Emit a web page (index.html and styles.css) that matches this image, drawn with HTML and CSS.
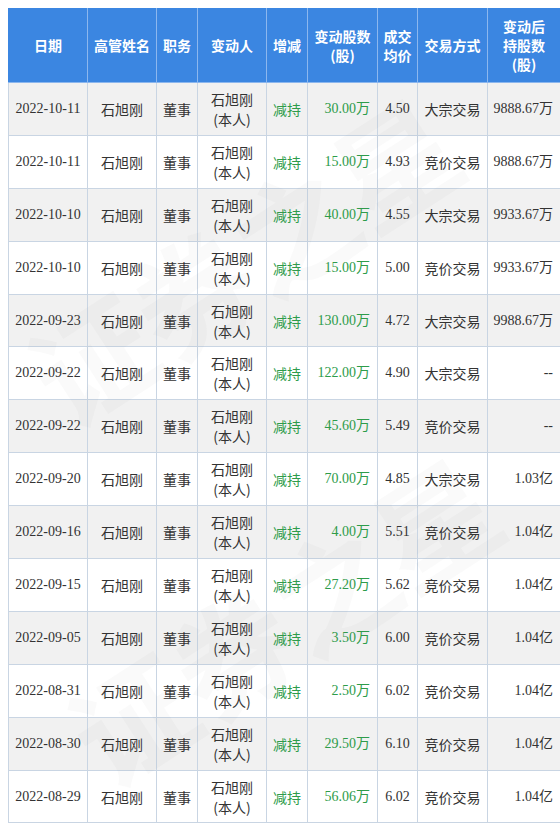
FILE: index.html
```html
<!DOCTYPE html>
<html lang="zh-CN">
<head>
<meta charset="utf-8">
<title>高管增减持</title>
<link rel="stylesheet" href="styles.css">
</head>
<body>
<div class="wrap">
<table class="tbl">
  <colgroup>
    <col class="c1"><col class="c2"><col class="c3"><col class="c4"><col class="c5"><col class="c6"><col class="c7"><col class="c8"><col class="c9">
  </colgroup>
  <thead>
    <tr>
      <th>日期</th><th>高管姓名</th><th>职务</th><th>变动人</th><th>增减</th><th>变动股数<br>(股)</th><th>成交<br>均价</th><th>交易方式</th><th>变动后<br>持股数<br>(股)</th>
    </tr>
  </thead>
  <tbody>
    <tr><td>2022-10-11</td><td class="cn">石旭刚</td><td class="cn">董事</td><td class="cn">石旭刚<br>(本人)</td><td class="cn green">减持</td><td class="r green">30.00万</td><td>4.50</td><td class="cn">大宗交易</td><td class="r">9888.67万</td></tr>
    <tr><td>2022-10-11</td><td class="cn">石旭刚</td><td class="cn">董事</td><td class="cn">石旭刚<br>(本人)</td><td class="cn green">减持</td><td class="r green">15.00万</td><td>4.93</td><td class="cn">竞价交易</td><td class="r">9888.67万</td></tr>
    <tr><td>2022-10-10</td><td class="cn">石旭刚</td><td class="cn">董事</td><td class="cn">石旭刚<br>(本人)</td><td class="cn green">减持</td><td class="r green">40.00万</td><td>4.55</td><td class="cn">大宗交易</td><td class="r">9933.67万</td></tr>
    <tr><td>2022-10-10</td><td class="cn">石旭刚</td><td class="cn">董事</td><td class="cn">石旭刚<br>(本人)</td><td class="cn green">减持</td><td class="r green">15.00万</td><td>5.00</td><td class="cn">竞价交易</td><td class="r">9933.67万</td></tr>
    <tr><td>2022-09-23</td><td class="cn">石旭刚</td><td class="cn">董事</td><td class="cn">石旭刚<br>(本人)</td><td class="cn green">减持</td><td class="r green">130.00万</td><td>4.72</td><td class="cn">大宗交易</td><td class="r">9988.67万</td></tr>
    <tr><td>2022-09-22</td><td class="cn">石旭刚</td><td class="cn">董事</td><td class="cn">石旭刚<br>(本人)</td><td class="cn green">减持</td><td class="r green">122.00万</td><td>4.90</td><td class="cn">大宗交易</td><td class="r">--</td></tr>
    <tr><td>2022-09-22</td><td class="cn">石旭刚</td><td class="cn">董事</td><td class="cn">石旭刚<br>(本人)</td><td class="cn green">减持</td><td class="r green">45.60万</td><td>5.49</td><td class="cn">竞价交易</td><td class="r">--</td></tr>
    <tr><td>2022-09-20</td><td class="cn">石旭刚</td><td class="cn">董事</td><td class="cn">石旭刚<br>(本人)</td><td class="cn green">减持</td><td class="r green">70.00万</td><td>4.85</td><td class="cn">大宗交易</td><td class="r">1.03亿</td></tr>
    <tr><td>2022-09-16</td><td class="cn">石旭刚</td><td class="cn">董事</td><td class="cn">石旭刚<br>(本人)</td><td class="cn green">减持</td><td class="r green">4.00万</td><td>5.51</td><td class="cn">竞价交易</td><td class="r">1.04亿</td></tr>
    <tr><td>2022-09-15</td><td class="cn">石旭刚</td><td class="cn">董事</td><td class="cn">石旭刚<br>(本人)</td><td class="cn green">减持</td><td class="r green">27.20万</td><td>5.62</td><td class="cn">竞价交易</td><td class="r">1.04亿</td></tr>
    <tr><td>2022-09-05</td><td class="cn">石旭刚</td><td class="cn">董事</td><td class="cn">石旭刚<br>(本人)</td><td class="cn green">减持</td><td class="r green">3.50万</td><td>6.00</td><td class="cn">竞价交易</td><td class="r">1.04亿</td></tr>
    <tr><td>2022-08-31</td><td class="cn">石旭刚</td><td class="cn">董事</td><td class="cn">石旭刚<br>(本人)</td><td class="cn green">减持</td><td class="r green">2.50万</td><td>6.02</td><td class="cn">竞价交易</td><td class="r">1.04亿</td></tr>
    <tr><td>2022-08-30</td><td class="cn">石旭刚</td><td class="cn">董事</td><td class="cn">石旭刚<br>(本人)</td><td class="cn green">减持</td><td class="r green">29.50万</td><td>6.10</td><td class="cn">竞价交易</td><td class="r">1.04亿</td></tr>
    <tr><td>2022-08-29</td><td class="cn">石旭刚</td><td class="cn">董事</td><td class="cn">石旭刚<br>(本人)</td><td class="cn green">减持</td><td class="r green">56.06万</td><td>6.02</td><td class="cn">竞价交易</td><td class="r">1.04亿</td></tr>
  </tbody>
</table>
<div class="watermark" aria-hidden="true">
  <span class="wm wm1">证券之星</span>
  <span class="wm wm2">证券之星</span>
</div>
</div>
</body>
</html>
```

FILE: styles.css
```css
html, body {
  margin: 0;
  padding: 0;
  background: #ffffff;
}
body {
  padding: 8px 0 0 8px;
  overflow: hidden;
}
.wrap {
  position: relative;
  width: 552px;
}
.tbl {
  border-collapse: collapse;
  table-layout: fixed;
  width: 552px;
  font-family: "Liberation Serif", "Noto Sans CJK SC", serif;
  font-size: 14px;
  color: #333333;
}
.c1 { width: 79px; }
.c2 { width: 69px; }
.c3 { width: 41px; }
.c4 { width: 69px; }
.c5 { width: 41px; }
.c6 { width: 70px; }
.c7 { width: 40px; }
.c8 { width: 70px; }
.c9 { width: 73px; }

.tbl thead tr {
  height: 74px;
}
.tbl th {
  background: #3b86e1;
  color: #ffffff;
  font-family: "Noto Sans CJK SC", sans-serif;
  font-weight: bold;
  font-size: 14px;
  line-height: 19px;
  text-align: center;
  vertical-align: middle;
  padding: 0 2px;
  border: 1px solid #8cb7ee;
  border-top-color: #3b86e1;
}
.tbl th:first-child { border-left-color: #3b86e1; }
.tbl th:last-child { border-right-color: #3b86e1; }

.tbl tbody tr {
  height: 52.9px;
}
.tbl tbody tr:nth-child(odd) td {
  background: rgba(240, 240, 240, 0.9);
}
.tbl td {
  border: 1px solid #c9d5e3;
  text-align: center;
  vertical-align: middle;
  padding: 0 6px;
  line-height: 20px;
  white-space: nowrap;
}
.tbl td.cn {
  font-family: "Noto Sans CJK SC", sans-serif;
  padding: 0 2px;
}
.tbl td.r {
  text-align: right;
  padding-right: 7px;
  padding-left: 2px;
}
.tbl td:first-child {
  padding: 0 2px;
}
.green {
  color: #2e9c4a;
}

.watermark {
  position: absolute;
  inset: 0;
  pointer-events: none;
}
.wm {
  position: absolute;
  font-family: "Noto Sans CJK SC", sans-serif;
  font-size: 120px;
  line-height: 120px;
  font-weight: bold;
  color: rgba(120, 120, 120, 0.035);
  white-space: nowrap;
  transform: rotate(-33deg);
  transform-origin: left top;
}
.wm1 { left: 0; top: 330px; }
.wm2 { left: 40px; top: 690px; }
```
